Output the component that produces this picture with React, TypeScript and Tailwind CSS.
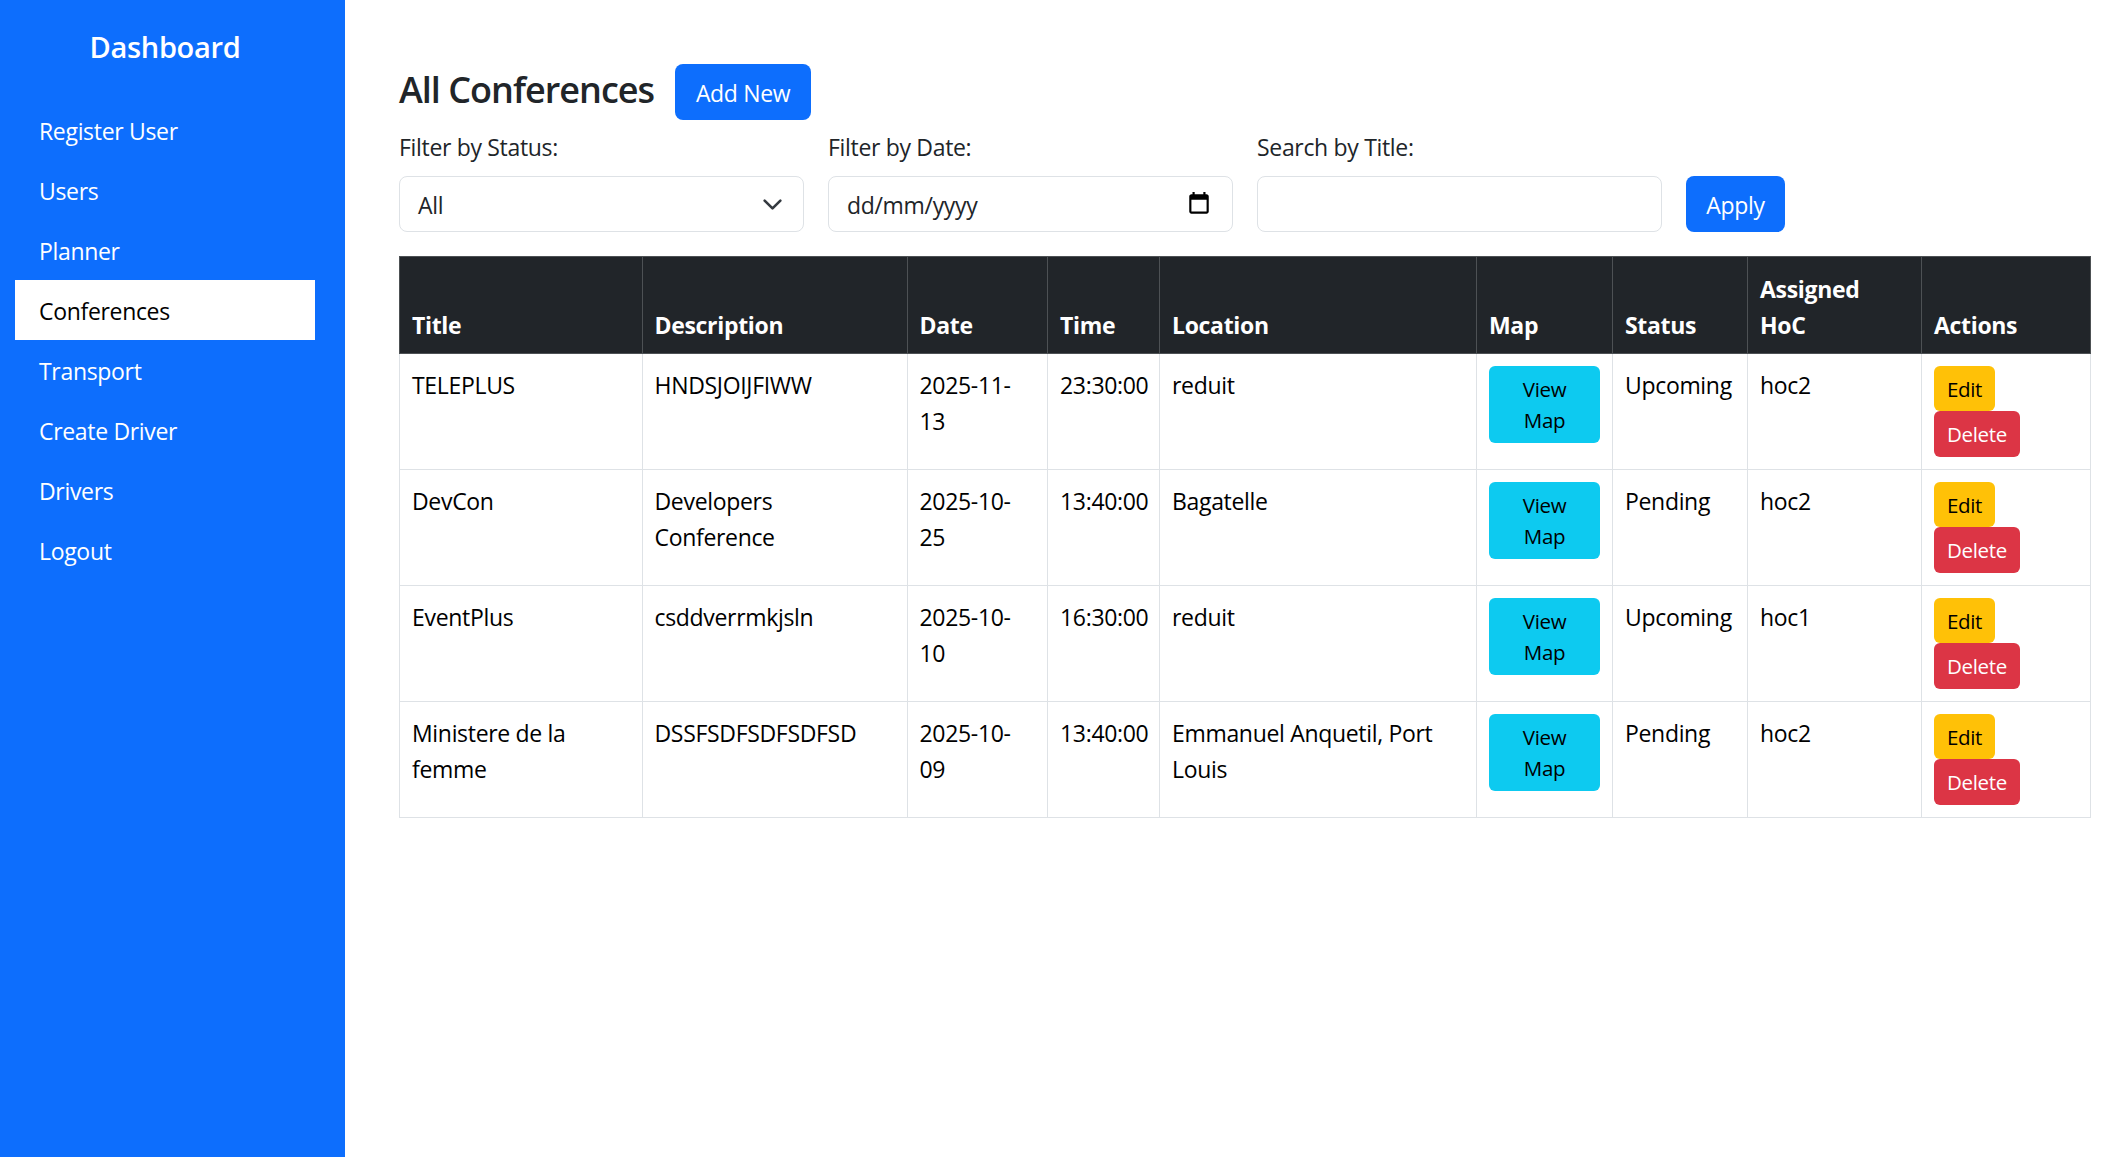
const navItems = ['Register User', 'Users', 'Planner', 'Conferences', 'Transport', 'Create Driver', 'Drivers', 'Logout']

const rows = [
  { title: 'TELEPLUS', desc: 'HNDSJOIJFIWW', date: '2025-11-13', time: '23:30:00', loc: 'reduit', status: 'Upcoming', hoc: 'hoc2' },
  { title: 'DevCon', desc: 'Developers Conference', date: '2025-10-25', time: '13:40:00', loc: 'Bagatelle', status: 'Pending', hoc: 'hoc2' },
  { title: 'EventPlus', desc: 'csddverrmkjsln', date: '2025-10-10', time: '16:30:00', loc: 'reduit', status: 'Upcoming', hoc: 'hoc1' },
  { title: 'Ministere de la femme', desc: 'DSSFSDFSDFSDFSD', date: '2025-10-09', time: '13:40:00', loc: 'Emmanuel Anquetil, Port Louis', status: 'Pending', hoc: 'hoc2' },
]

const th = 'border border-[#4d5154] bg-[#212529] px-3 pt-[10px] pb-[10px] text-left align-bottom font-bold text-white'
const td = 'border border-[#dee2e6] px-3 pt-[13px] pb-[10px] align-top text-black'

const App = () => {
  return (
    <div className="flex h-[1157px] w-full font-['Open_Sans','Liberation_Sans',sans-serif] text-[23px] leading-[36px] tracking-[-0.014em] text-[#212529]">
      <aside className="flex w-[345px] shrink-0 flex-col bg-[#0d6efd] px-[15px] pt-[24px] text-white">
        <h4 className="mb-[30px] pr-[15px] text-center text-[29px] font-semibold leading-[46px]">Dashboard</h4>
        <nav className="flex w-[300px] flex-col">
          {navItems.map((item) => (
            <a
              key={item}
              className={
                item === 'Conferences'
                  ? 'h-[60px] bg-white px-6 pt-[13px] text-black'
                  : 'h-[60px] px-6 pt-[13px] text-white'
              }
            >
              {item}
            </a>
          ))}
        </nav>
      </aside>

      <main className="min-w-0 flex-1 pl-[54px] pr-[34px] pt-[64px]">
        <div className="flex items-center gap-[21px]">
          <h2 className="-mt-[4px] text-[36px] font-semibold leading-[50px] tracking-[-0.0275em]">All Conferences</h2>
          <button className="h-[56px] w-[136px] rounded-[8px] bg-[#0d6efd] pt-[1px] text-white">Add New</button>
        </div>

        <div className="mt-[9px] flex items-end gap-[24px]">
          <div className="flex w-[405px] flex-col gap-[11px]">
            <label>Filter by Status:</label>
            <div className="flex h-[56px] items-center justify-between rounded-[8px] border border-[#dee2e6] pl-[18px] pr-[20px]">
              <span className="pt-[2px]">All</span>
              <svg width="21" height="21" viewBox="0 0 16 16" fill="none" stroke="#343a40" strokeWidth="2" strokeLinecap="round" strokeLinejoin="round">
                <path d="m2 5 6 6 6-6" />
              </svg>
            </div>
          </div>
          <div className="flex w-[405px] flex-col gap-[11px]">
            <label>Filter by Date:</label>
            <div className="flex h-[56px] items-center justify-between rounded-[8px] border border-[#dee2e6] pl-[18px] pr-[20px]">
              <span className="pt-[2px]">dd/mm/yyyy</span>
              <svg width="26" height="26" viewBox="0 0 24 24" fill="#000">
                <path d="M19 3h-1V1h-2v2H8V1H6v2H5c-1.1 0-2 .9-2 2v14c0 1.1.9 2 2 2h14c1.1 0 2-.9 2-2V5c0-1.1-.9-2-2-2zm0 16H5V8h14v11z" />
              </svg>
            </div>
          </div>
          <div className="flex w-[405px] flex-col gap-[11px]">
            <label>Search by Title:</label>
            <input className="h-[56px] rounded-[8px] border border-[#dee2e6] px-[18px]" />
          </div>
          <button className="h-[56px] w-[99px] rounded-[8px] bg-[#0d6efd] pt-[1px] text-white">Apply</button>
        </div>

        <table className="mt-[24px] w-[1691px] table-fixed border-collapse">
          <thead>
            <tr className="h-[97px]">
              <th className={`${th} w-[242.5px]`}>Title</th>
              <th className={`${th} w-[265px]`}>Description</th>
              <th className={`${th} w-[140.5px]`}>Date</th>
              <th className={`${th} w-[112px]`}>Time</th>
              <th className={`${th} w-[317px]`}>Location</th>
              <th className={`${th} w-[136px]`}>Map</th>
              <th className={`${th} w-[135px]`}>Status</th>
              <th className={`${th} w-[174px]`}>Assigned<br />HoC</th>
              <th className={`${th} w-[169px]`}>Actions</th>
            </tr>
          </thead>
          <tbody>
            {rows.map((row) => (
              <tr key={row.title} className="h-[116px]">
                <td className={td}>{row.title}</td>
                <td className={td}>{row.desc}</td>
                <td className={td}>{row.date}</td>
                <td className={td}>{row.time}</td>
                <td className={td}>{row.loc}</td>
                <td className={td}>
                  <button className="-mt-px block h-[77px] w-[111px] rounded-[6px] bg-[#0dcaf0] px-6 text-[20.5px] leading-[31px] text-black">View Map</button>
                </td>
                <td className={td}>{row.status}</td>
                <td className={td}>{row.hoc}</td>
                <td className={td}>
                  <div className="-mt-px flex flex-col items-start">
                    <button className="h-[45px] w-[61px] rounded-[6px] bg-[#ffc107] text-[20.5px] text-black">Edit</button>
                    <button className="h-[46px] w-[86px] rounded-[6px] bg-[#dc3545] text-[20.5px] text-white">Delete</button>
                  </div>
                </td>
              </tr>
            ))}
          </tbody>
        </table>
      </main>
    </div>
  )
}

export default App
